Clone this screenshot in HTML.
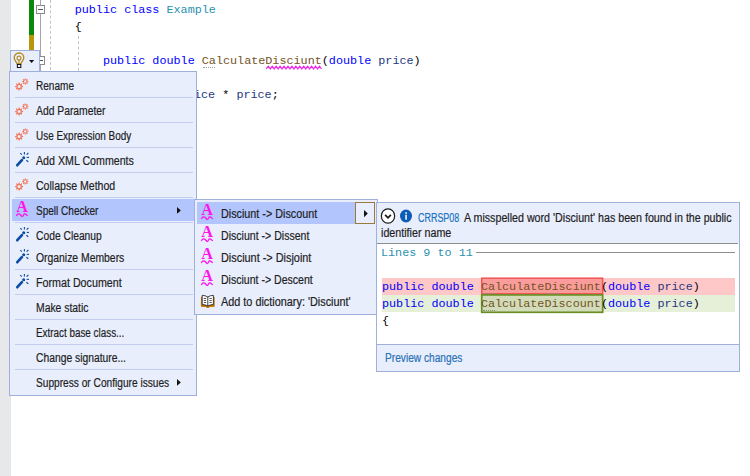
<!DOCTYPE html>
<html><head><meta charset="utf-8">
<style>
html,body{margin:0;padding:0;}
body{width:750px;height:476px;background:#fff;position:relative;overflow:hidden;font-family:"Liberation Sans",sans-serif;}
.abs{position:absolute;}
.code{font-family:"Liberation Mono",monospace;font-size:11.77px;white-space:pre;color:#000;line-height:17px;}
.kw{color:#0000ff;}
.ty{color:#2b91af;}
.pm{color:#1f377f;}
.menu{background:#e9eefd;border:1px solid #a0b0dc;box-sizing:border-box;}
.mi{position:absolute;left:36px;font-size:12px;color:#1e1e1e;white-space:nowrap;line-height:14px;transform-origin:0 50%;transform:scaleX(0.9);margin-top:0.4px;-webkit-text-stroke:0.2px currentColor;}
.sep{position:absolute;left:15px;width:178px;height:1px;background:#c3cdf0;}
</style></head><body>
<!-- left margin -->
<div class="abs" style="left:0;top:0;width:11px;height:476px;background:#e7e8e9;"></div>
<!-- change bars -->
<div class="abs" style="left:29px;top:0;width:5px;height:35px;background:#0a8a0a;"></div>
<div class="abs" style="left:29px;top:35px;width:5px;height:16px;background:#b8960a;"></div>
<!-- outline -->
<div class="abs" style="left:40px;top:0;width:1px;height:71px;background:#a5a5a5;"></div>
<div class="abs" style="left:36px;top:5px;width:9px;height:9px;border:1px solid #8a8a8a;background:#fff;box-sizing:border-box;"></div>
<div class="abs" style="left:38px;top:9px;width:5px;height:1px;background:#555;"></div>
<div class="abs" style="left:49.5px;top:0;width:0;height:70px;border-left:1px dashed #c4c4c4;"></div>
<div class="abs" style="left:78px;top:36px;width:0;height:40px;border-left:1px dashed #c4c4c4;"></div>
<!-- code -->
<div class="abs code" style="left:74.7px;top:2px;"><span class="kw">public</span> <span class="kw">class</span> <span class="ty">Example</span></div>
<div class="abs code" style="left:74.7px;top:19px;">{</div>
<div class="abs code" style="left:102.9px;top:53px;"><span class="kw">public</span> <span class="kw">double</span> <span style="color:#74531f">CalculateDisciunt</span>(<span class="kw">double</span> <span class="pm">price</span>)</div>
<div class="abs code" style="left:194px;top:87px;"><span class="pm">ice</span> * <span class="pm">price</span>;</div>
<svg class="abs" style="left:266px;top:65px" width="58" height="6" viewBox="0 0 58 6"><path d="M0.3 3.9 L2.27 1.2 L4.24 3.9 L6.21 1.2 L8.18 3.9 L10.15 1.2 L12.12 3.9 L14.09 1.2 L16.06 3.9 L18.03 1.2 L20.00 3.9 L21.97 1.2 L23.94 3.9 L25.91 1.2 L27.88 3.9 L29.85 1.2 L31.82 3.9 L33.79 1.2 L35.76 3.9 L37.73 1.2 L39.70 3.9 L41.67 1.2 L43.64 3.9 L45.61 1.2 L47.58 3.9 L49.55 1.2 L51.52 3.9 L53.49 1.2 L55.46 3.9" fill="none" stroke="#f222ee" stroke-width="1.2"/></svg>
<div class="abs" style="left:203px;top:66.5px;width:12px;height:0;border-top:1px dotted #9a9a9a;"></div>
<div class="abs" style="left:36px;top:56px;width:9px;height:9px;border:1px solid #8a8a8a;background:#fff;box-sizing:border-box;"></div>
<div class="abs" style="left:38px;top:60px;width:5px;height:1px;background:#555;"></div>
<!-- lightbulb box -->
<div class="abs" style="left:10px;top:50px;width:30px;height:22px;background:#e9eefd;border:1px solid #a0b0dc;border-bottom:none;box-sizing:border-box;"></div>
<!-- main menu -->
<div class="abs menu" style="left:9px;top:71px;width:188px;height:325px;"></div>
<div class="abs" style="left:12px;top:199px;width:183px;height:22px;background:#b2c5fd;"></div>
<div class="sep" style="top:97px"></div>
<div class="sep" style="top:122px"></div>
<div class="sep" style="top:147px"></div>
<div class="sep" style="top:172px"></div>
<div class="sep" style="top:197px"></div>
<div class="sep" style="top:222px"></div>
<div class="sep" style="top:269px"></div>
<div class="sep" style="top:294px"></div>
<div class="sep" style="top:319px"></div>
<div class="sep" style="top:344px"></div>
<div class="sep" style="top:369px"></div>
<div class="mi" style="left:35.9px;top:79px;transform:scaleX(0.8378);">Rename</div>
<div class="mi" style="left:35.9px;top:104px;transform:scaleX(0.8610);">Add Parameter</div>
<div class="mi" style="left:35.9px;top:129px;transform:scaleX(0.8297);">Use Expression Body</div>
<div class="mi" style="left:35.9px;top:154px;transform:scaleX(0.8879);">Add XML Comments</div>
<div class="mi" style="left:35.9px;top:179px;transform:scaleX(0.8794);">Collapse Method</div>
<div class="mi" style="left:35.9px;top:204px;transform:scaleX(0.8353);">Spell Checker</div>
<div class="mi" style="left:35.9px;top:229px;transform:scaleX(0.8575);">Code Cleanup</div>
<div class="mi" style="left:35.9px;top:251px;transform:scaleX(0.8653);">Organize Members</div>
<div class="mi" style="left:35.9px;top:276px;transform:scaleX(0.8924);">Format Document</div>
<div class="mi" style="left:35.9px;top:301px;transform:scaleX(0.8651);">Make static</div>
<div class="mi" style="left:35.9px;top:326px;transform:scaleX(0.8224);">Extract base class...</div>
<div class="mi" style="left:35.9px;top:351px;transform:scaleX(0.8592);">Change signature...</div>
<div class="mi" style="left:35.9px;top:376px;transform:scaleX(0.8461);">Suppress or Configure issues</div>

<!-- submenu -->
<div class="abs menu" style="left:194px;top:199px;width:184px;height:116px;"></div>
<div class="abs" style="left:197px;top:202px;width:158px;height:22px;background:#b2c5fd;"></div>
<div class="abs" style="left:355px;top:202px;width:20px;height:22px;background:#e9eefd;border:1px solid #9a7b3a;box-sizing:border-box;"></div>
<div class="mi" style="left:221.4px;top:207px;transform:scaleX(0.8987);">Disciunt -&gt; Discount</div>
<div class="mi" style="left:221.4px;top:229px;transform:scaleX(0.8807);">Disciunt -&gt; Dissent</div>
<div class="mi" style="left:221.4px;top:251px;transform:scaleX(0.9067);">Disciunt -&gt; Disjoint</div>
<div class="mi" style="left:221.4px;top:273px;transform:scaleX(0.8786);">Disciunt -&gt; Descent</div>
<div class="mi" style="left:221.4px;top:295px;transform:scaleX(0.9049);">Add to dictionary: 'Disciunt'</div>

<!-- preview panel -->
<div class="abs" style="left:376px;top:202px;width:364px;height:170px;background:#fff;border:1px solid #a0b0dc;box-sizing:border-box;"></div>
<div class="abs" style="left:377px;top:203px;width:362px;height:40px;background:#e9eefd;"></div>
<div class="abs" style="left:377px;top:243px;width:361px;height:1px;background:#8e8e8e;"></div>
<div class="abs" style="left:377px;top:344px;width:362px;height:1px;background:#a0b0dc;"></div>
<div class="abs" style="left:377px;top:345px;width:362px;height:26px;background:#e9eefd;"></div>
<div class="mi" style="left:418px;top:211px;transform:scaleX(0.7460);color:#1b73c2;">CRRSP08</div>
<div class="mi" style="left:464.4px;top:211px;transform:scaleX(0.8897);">A misspelled word 'Disciunt' has been found in the public</div>
<div class="mi" style="left:381px;top:226px;transform:scaleX(0.8931);">identifier name</div>
<div class="mi" style="left:384.6px;top:350.5px;transform:scaleX(0.8469);color:#2a72b5;">Preview changes</div>

<div class="abs code" style="left:381px;top:245px;color:#2b91af">Lines 9 to 11</div>
<div class="abs" style="left:476px;top:252px;width:259px;height:1px;background:#8e8e8e;"></div>
<div class="abs" style="left:382px;top:278px;width:353px;height:17px;background:#ffc8c8;"></div>
<div class="abs" style="left:382px;top:295px;width:353px;height:17px;background:#e6efd8;"></div>
<svg class="abs" style="left:480px;top:276px" width="126" height="40" viewBox="0 0 126 40"><rect x="1.75" y="2.2" width="120.9" height="15.6" fill="#fa9c9b" stroke="#f05453" stroke-width="1.5"/><rect x="1.75" y="18.9" width="120.9" height="17.4" fill="#d2dcba" stroke="#6b8e23" stroke-width="1.7"/></svg>
<div class="abs" style="left:483px;top:293px;width:12px;height:0;border-top:1px dotted #a08a80;"></div><div class="abs" style="left:547px;top:293px;width:12px;height:0;border-top:1px dotted #a08a80;"></div><div class="abs" style="left:483px;top:310px;width:12px;height:0;border-top:1px dotted #8a927a;"></div>
<div class="abs code" style="left:382px;top:279px;"><span class="kw">public</span> <span class="kw">double</span> <span style="color:#74531f">CalculateDisciunt</span>(<span class="kw">double</span> <span class="pm">price</span>)</div>
<div class="abs code" style="left:382px;top:296px;"><span class="kw">public</span> <span class="kw">double</span> <span style="color:#74531f">CalculateDiscount</span>(<span class="kw">double</span> <span class="pm">price</span>)</div>
<div class="abs code" style="left:382px;top:313px;">{</div>
<svg class="abs" style="left:10px;top:75px;overflow:visible" width="20" height="20" viewBox="0 0 20 20"><circle cx="9.1" cy="11.5" r="2.2" fill="none" stroke="#f1765a" stroke-width="1.3"/><line x1="11.70" y1="11.50" x2="13.10" y2="11.50" stroke="#f1765a" stroke-width="1.25"/><line x1="10.94" y1="13.34" x2="11.93" y2="14.33" stroke="#f1765a" stroke-width="1.25"/><line x1="9.10" y1="14.10" x2="9.10" y2="15.50" stroke="#f1765a" stroke-width="1.25"/><line x1="7.26" y1="13.34" x2="6.27" y2="14.33" stroke="#f1765a" stroke-width="1.25"/><line x1="6.50" y1="11.50" x2="5.10" y2="11.50" stroke="#f1765a" stroke-width="1.25"/><line x1="7.26" y1="9.66" x2="6.27" y2="8.67" stroke="#f1765a" stroke-width="1.25"/><line x1="9.10" y1="8.90" x2="9.10" y2="7.50" stroke="#f1765a" stroke-width="1.25"/><line x1="10.94" y1="9.66" x2="11.93" y2="8.67" stroke="#f1765a" stroke-width="1.25"/><circle cx="15.3" cy="6.5" r="1.8" fill="none" stroke="#f1765a" stroke-width="1.1"/><line x1="17.40" y1="6.50" x2="18.40" y2="6.50" stroke="#f1765a" stroke-width="1.1"/><line x1="16.78" y1="7.98" x2="17.49" y2="8.69" stroke="#f1765a" stroke-width="1.1"/><line x1="15.30" y1="8.60" x2="15.30" y2="9.60" stroke="#f1765a" stroke-width="1.1"/><line x1="13.82" y1="7.98" x2="13.11" y2="8.69" stroke="#f1765a" stroke-width="1.1"/><line x1="13.20" y1="6.50" x2="12.20" y2="6.50" stroke="#f1765a" stroke-width="1.1"/><line x1="13.82" y1="5.02" x2="13.11" y2="4.31" stroke="#f1765a" stroke-width="1.1"/><line x1="15.30" y1="4.40" x2="15.30" y2="3.40" stroke="#f1765a" stroke-width="1.1"/><line x1="16.78" y1="5.02" x2="17.49" y2="4.31" stroke="#f1765a" stroke-width="1.1"/></svg>
<svg class="abs" style="left:10px;top:100px;overflow:visible" width="20" height="20" viewBox="0 0 20 20"><circle cx="9.1" cy="11.5" r="2.2" fill="none" stroke="#f1765a" stroke-width="1.3"/><line x1="11.70" y1="11.50" x2="13.10" y2="11.50" stroke="#f1765a" stroke-width="1.25"/><line x1="10.94" y1="13.34" x2="11.93" y2="14.33" stroke="#f1765a" stroke-width="1.25"/><line x1="9.10" y1="14.10" x2="9.10" y2="15.50" stroke="#f1765a" stroke-width="1.25"/><line x1="7.26" y1="13.34" x2="6.27" y2="14.33" stroke="#f1765a" stroke-width="1.25"/><line x1="6.50" y1="11.50" x2="5.10" y2="11.50" stroke="#f1765a" stroke-width="1.25"/><line x1="7.26" y1="9.66" x2="6.27" y2="8.67" stroke="#f1765a" stroke-width="1.25"/><line x1="9.10" y1="8.90" x2="9.10" y2="7.50" stroke="#f1765a" stroke-width="1.25"/><line x1="10.94" y1="9.66" x2="11.93" y2="8.67" stroke="#f1765a" stroke-width="1.25"/><circle cx="15.3" cy="6.5" r="1.8" fill="none" stroke="#f1765a" stroke-width="1.1"/><line x1="17.40" y1="6.50" x2="18.40" y2="6.50" stroke="#f1765a" stroke-width="1.1"/><line x1="16.78" y1="7.98" x2="17.49" y2="8.69" stroke="#f1765a" stroke-width="1.1"/><line x1="15.30" y1="8.60" x2="15.30" y2="9.60" stroke="#f1765a" stroke-width="1.1"/><line x1="13.82" y1="7.98" x2="13.11" y2="8.69" stroke="#f1765a" stroke-width="1.1"/><line x1="13.20" y1="6.50" x2="12.20" y2="6.50" stroke="#f1765a" stroke-width="1.1"/><line x1="13.82" y1="5.02" x2="13.11" y2="4.31" stroke="#f1765a" stroke-width="1.1"/><line x1="15.30" y1="4.40" x2="15.30" y2="3.40" stroke="#f1765a" stroke-width="1.1"/><line x1="16.78" y1="5.02" x2="17.49" y2="4.31" stroke="#f1765a" stroke-width="1.1"/></svg>
<svg class="abs" style="left:10px;top:125px;overflow:visible" width="20" height="20" viewBox="0 0 20 20"><circle cx="9.1" cy="11.5" r="2.2" fill="none" stroke="#f1765a" stroke-width="1.3"/><line x1="11.70" y1="11.50" x2="13.10" y2="11.50" stroke="#f1765a" stroke-width="1.25"/><line x1="10.94" y1="13.34" x2="11.93" y2="14.33" stroke="#f1765a" stroke-width="1.25"/><line x1="9.10" y1="14.10" x2="9.10" y2="15.50" stroke="#f1765a" stroke-width="1.25"/><line x1="7.26" y1="13.34" x2="6.27" y2="14.33" stroke="#f1765a" stroke-width="1.25"/><line x1="6.50" y1="11.50" x2="5.10" y2="11.50" stroke="#f1765a" stroke-width="1.25"/><line x1="7.26" y1="9.66" x2="6.27" y2="8.67" stroke="#f1765a" stroke-width="1.25"/><line x1="9.10" y1="8.90" x2="9.10" y2="7.50" stroke="#f1765a" stroke-width="1.25"/><line x1="10.94" y1="9.66" x2="11.93" y2="8.67" stroke="#f1765a" stroke-width="1.25"/><circle cx="15.3" cy="6.5" r="1.8" fill="none" stroke="#f1765a" stroke-width="1.1"/><line x1="17.40" y1="6.50" x2="18.40" y2="6.50" stroke="#f1765a" stroke-width="1.1"/><line x1="16.78" y1="7.98" x2="17.49" y2="8.69" stroke="#f1765a" stroke-width="1.1"/><line x1="15.30" y1="8.60" x2="15.30" y2="9.60" stroke="#f1765a" stroke-width="1.1"/><line x1="13.82" y1="7.98" x2="13.11" y2="8.69" stroke="#f1765a" stroke-width="1.1"/><line x1="13.20" y1="6.50" x2="12.20" y2="6.50" stroke="#f1765a" stroke-width="1.1"/><line x1="13.82" y1="5.02" x2="13.11" y2="4.31" stroke="#f1765a" stroke-width="1.1"/><line x1="15.30" y1="4.40" x2="15.30" y2="3.40" stroke="#f1765a" stroke-width="1.1"/><line x1="16.78" y1="5.02" x2="17.49" y2="4.31" stroke="#f1765a" stroke-width="1.1"/></svg>
<svg class="abs" style="left:10px;top:175px;overflow:visible" width="20" height="20" viewBox="0 0 20 20"><circle cx="9.1" cy="11.5" r="2.2" fill="none" stroke="#f1765a" stroke-width="1.3"/><line x1="11.70" y1="11.50" x2="13.10" y2="11.50" stroke="#f1765a" stroke-width="1.25"/><line x1="10.94" y1="13.34" x2="11.93" y2="14.33" stroke="#f1765a" stroke-width="1.25"/><line x1="9.10" y1="14.10" x2="9.10" y2="15.50" stroke="#f1765a" stroke-width="1.25"/><line x1="7.26" y1="13.34" x2="6.27" y2="14.33" stroke="#f1765a" stroke-width="1.25"/><line x1="6.50" y1="11.50" x2="5.10" y2="11.50" stroke="#f1765a" stroke-width="1.25"/><line x1="7.26" y1="9.66" x2="6.27" y2="8.67" stroke="#f1765a" stroke-width="1.25"/><line x1="9.10" y1="8.90" x2="9.10" y2="7.50" stroke="#f1765a" stroke-width="1.25"/><line x1="10.94" y1="9.66" x2="11.93" y2="8.67" stroke="#f1765a" stroke-width="1.25"/><circle cx="15.3" cy="6.5" r="1.8" fill="none" stroke="#f1765a" stroke-width="1.1"/><line x1="17.40" y1="6.50" x2="18.40" y2="6.50" stroke="#f1765a" stroke-width="1.1"/><line x1="16.78" y1="7.98" x2="17.49" y2="8.69" stroke="#f1765a" stroke-width="1.1"/><line x1="15.30" y1="8.60" x2="15.30" y2="9.60" stroke="#f1765a" stroke-width="1.1"/><line x1="13.82" y1="7.98" x2="13.11" y2="8.69" stroke="#f1765a" stroke-width="1.1"/><line x1="13.20" y1="6.50" x2="12.20" y2="6.50" stroke="#f1765a" stroke-width="1.1"/><line x1="13.82" y1="5.02" x2="13.11" y2="4.31" stroke="#f1765a" stroke-width="1.1"/><line x1="15.30" y1="4.40" x2="15.30" y2="3.40" stroke="#f1765a" stroke-width="1.1"/><line x1="16.78" y1="5.02" x2="17.49" y2="4.31" stroke="#f1765a" stroke-width="1.1"/></svg>
<svg class="abs" style="left:10px;top:150px;overflow:visible" width="20" height="20" viewBox="0 0 20 20"><line x1="7.300000000000001" y1="15.199999999999989" x2="11.899999999999999" y2="10.199999999999989" stroke="#0c4ea2" stroke-width="2.7" stroke-linecap="round"/><circle cx="13.7" cy="7.800000000000011" r="1.55" fill="#0c4ea2"/><line x1="14.4" y1="2.0" x2="14.4" y2="4.4" stroke="#0c4ea2" stroke-width="1.1"/><line x1="10.3" y1="3.0" x2="11.7" y2="4.6" stroke="#0c4ea2" stroke-width="1.1"/><line x1="16.6" y1="4.6" x2="18.4" y2="3.0" stroke="#0c4ea2" stroke-width="1.1"/><line x1="16.7" y1="7.4" x2="19.0" y2="7.4" stroke="#0c4ea2" stroke-width="1.1"/><line x1="16.3" y1="10.2" x2="18.3" y2="11.8" stroke="#0c4ea2" stroke-width="1.1"/></svg>
<svg class="abs" style="left:10px;top:225px;overflow:visible" width="20" height="20" viewBox="0 0 20 20"><line x1="7.300000000000001" y1="15.199999999999989" x2="11.899999999999999" y2="10.199999999999989" stroke="#0c4ea2" stroke-width="2.7" stroke-linecap="round"/><circle cx="13.7" cy="7.800000000000011" r="1.55" fill="#0c4ea2"/><line x1="14.4" y1="2.0" x2="14.4" y2="4.4" stroke="#0c4ea2" stroke-width="1.1"/><line x1="10.3" y1="3.0" x2="11.7" y2="4.6" stroke="#0c4ea2" stroke-width="1.1"/><line x1="16.6" y1="4.6" x2="18.4" y2="3.0" stroke="#0c4ea2" stroke-width="1.1"/><line x1="16.7" y1="7.4" x2="19.0" y2="7.4" stroke="#0c4ea2" stroke-width="1.1"/><line x1="16.3" y1="10.2" x2="18.3" y2="11.8" stroke="#0c4ea2" stroke-width="1.1"/></svg>
<svg class="abs" style="left:10px;top:247px;overflow:visible" width="20" height="20" viewBox="0 0 20 20"><line x1="7.300000000000001" y1="15.199999999999989" x2="11.899999999999999" y2="10.199999999999989" stroke="#0c4ea2" stroke-width="2.7" stroke-linecap="round"/><circle cx="13.7" cy="7.800000000000011" r="1.55" fill="#0c4ea2"/><line x1="14.4" y1="2.0" x2="14.4" y2="4.4" stroke="#0c4ea2" stroke-width="1.1"/><line x1="10.3" y1="3.0" x2="11.7" y2="4.6" stroke="#0c4ea2" stroke-width="1.1"/><line x1="16.6" y1="4.6" x2="18.4" y2="3.0" stroke="#0c4ea2" stroke-width="1.1"/><line x1="16.7" y1="7.4" x2="19.0" y2="7.4" stroke="#0c4ea2" stroke-width="1.1"/><line x1="16.3" y1="10.2" x2="18.3" y2="11.8" stroke="#0c4ea2" stroke-width="1.1"/></svg>
<svg class="abs" style="left:10px;top:272px;overflow:visible" width="20" height="20" viewBox="0 0 20 20"><line x1="7.300000000000001" y1="15.199999999999989" x2="11.899999999999999" y2="10.199999999999989" stroke="#0c4ea2" stroke-width="2.7" stroke-linecap="round"/><circle cx="13.7" cy="7.800000000000011" r="1.55" fill="#0c4ea2"/><line x1="14.4" y1="2.0" x2="14.4" y2="4.4" stroke="#0c4ea2" stroke-width="1.1"/><line x1="10.3" y1="3.0" x2="11.7" y2="4.6" stroke="#0c4ea2" stroke-width="1.1"/><line x1="16.6" y1="4.6" x2="18.4" y2="3.0" stroke="#0c4ea2" stroke-width="1.1"/><line x1="16.7" y1="7.4" x2="19.0" y2="7.4" stroke="#0c4ea2" stroke-width="1.1"/><line x1="16.3" y1="10.2" x2="18.3" y2="11.8" stroke="#0c4ea2" stroke-width="1.1"/></svg>
<svg class="abs" style="left:14px;top:200.35px;overflow:visible" width="16" height="20" viewBox="0 0 16 20"><text x="8" y="12" text-anchor="middle" font-family="Liberation Serif, serif" font-weight="bold" font-size="16.2" fill="#ff14ee">A</text><path d="M2.2 15.9 Q4.4 12.5 6.2 14.5 T8 16.5 Q9.2 16.5 9.8 14.5 T13.8 15.9" fill="none" stroke="#ff14ee" stroke-width="1.25"/></svg>
<svg class="abs" style="left:199.3px;top:203.35px;overflow:visible" width="16" height="20" viewBox="0 0 16 20"><text x="8" y="12" text-anchor="middle" font-family="Liberation Serif, serif" font-weight="bold" font-size="16.2" fill="#ff14ee">A</text><path d="M2.2 15.9 Q4.4 12.5 6.2 14.5 T8 16.5 Q9.2 16.5 9.8 14.5 T13.8 15.9" fill="none" stroke="#ff14ee" stroke-width="1.25"/></svg>
<svg class="abs" style="left:199.3px;top:225.35px;overflow:visible" width="16" height="20" viewBox="0 0 16 20"><text x="8" y="12" text-anchor="middle" font-family="Liberation Serif, serif" font-weight="bold" font-size="16.2" fill="#ff14ee">A</text><path d="M2.2 15.9 Q4.4 12.5 6.2 14.5 T8 16.5 Q9.2 16.5 9.8 14.5 T13.8 15.9" fill="none" stroke="#ff14ee" stroke-width="1.25"/></svg>
<svg class="abs" style="left:199.3px;top:247.35000000000002px;overflow:visible" width="16" height="20" viewBox="0 0 16 20"><text x="8" y="12" text-anchor="middle" font-family="Liberation Serif, serif" font-weight="bold" font-size="16.2" fill="#ff14ee">A</text><path d="M2.2 15.9 Q4.4 12.5 6.2 14.5 T8 16.5 Q9.2 16.5 9.8 14.5 T13.8 15.9" fill="none" stroke="#ff14ee" stroke-width="1.25"/></svg>
<svg class="abs" style="left:199.3px;top:269.35px;overflow:visible" width="16" height="20" viewBox="0 0 16 20"><text x="8" y="12" text-anchor="middle" font-family="Liberation Serif, serif" font-weight="bold" font-size="16.2" fill="#ff14ee">A</text><path d="M2.2 15.9 Q4.4 12.5 6.2 14.5 T8 16.5 Q9.2 16.5 9.8 14.5 T13.8 15.9" fill="none" stroke="#ff14ee" stroke-width="1.25"/></svg>
<svg class="abs" style="left:200px;top:294px;overflow:visible" width="16" height="16" viewBox="0 0 16 16"><path d="M0.9000000000000057 3.3000000000000114 Q0.9000000000000057 2.8000000000000114 1.5999999999999943 2.8000000000000114 L14.0 2.8000000000000114 Q14.699999999999989 2.8000000000000114 14.699999999999989 3.5 L14.699999999999989 12.0 Q14.699999999999989 12.899999999999977 13.800000000000011 12.899999999999977 L9.599999999999994 12.899999999999977 L9.0 14.0 L6.599999999999994 14.0 L6.0 12.899999999999977 L1.8000000000000114 12.899999999999977 Q0.9000000000000057 12.899999999999977 0.9000000000000057 12.0 Z" fill="#c8790e"/><path d="M2.1999999999999886 1.3999999999999773 Q5.5 1.3999999999999773 7.800000000000011 3.0 Q10.099999999999994 1.3999999999999773 13.400000000000006 1.3999999999999773 L13.400000000000006 10.600000000000023 Q10.099999999999994 10.600000000000023 7.800000000000011 12.0 Q5.5 10.600000000000023 2.1999999999999886 10.600000000000023 Z" fill="#fff" stroke="#2a2a2a" stroke-width="0.9"/><line x1="7.800000000000011" y1="3.0" x2="7.800000000000011" y2="12.0" stroke="#2a2a2a" stroke-width="0.9"/><line x1="3.8000000000000114" y1="4.5" x2="6.199999999999989" y2="4.5" stroke="#444" stroke-width="0.9"/><line x1="9.400000000000006" y1="4.5" x2="11.800000000000011" y2="4.5" stroke="#444" stroke-width="0.9"/><line x1="3.8000000000000114" y1="6.5" x2="6.199999999999989" y2="6.5" stroke="#444" stroke-width="0.9"/><line x1="9.400000000000006" y1="6.5" x2="11.800000000000011" y2="6.5" stroke="#444" stroke-width="0.9"/><line x1="3.8000000000000114" y1="8.5" x2="6.199999999999989" y2="8.5" stroke="#444" stroke-width="0.9"/><line x1="9.400000000000006" y1="8.5" x2="11.800000000000011" y2="8.5" stroke="#444" stroke-width="0.9"/></svg>
<svg class="abs" style="left:177px;top:207.2px;overflow:visible" width="3.8" height="6.8" viewBox="0 0 3.8 6.8"><path d="M0 0 L3.8 3.4 L0 6.8 Z" fill="#111"/></svg>
<svg class="abs" style="left:177px;top:379.20000000000005px;overflow:visible" width="3.8" height="6.8" viewBox="0 0 3.8 6.8"><path d="M0 0 L3.8 3.4 L0 6.8 Z" fill="#111"/></svg>
<svg class="abs" style="left:363.9px;top:209.8px;overflow:visible" width="3.8" height="7.2" viewBox="0 0 3.8 7.2"><path d="M0 0 L3.8 3.6 L0 7.2 Z" fill="#111"/></svg>
<svg class="abs" style="left:10px;top:50.4px;overflow:visible" width="20" height="20" viewBox="0 0 20 20"><path d="M9 3 C5.9 3 4.2 5.3 4.2 7.8 C4.2 10.4 6.6 11.6 7.1 13.9 L10.9 13.9 C11.4 11.6 13.8 10.4 13.8 7.8 C13.8 5.3 12.1 3 9 3 Z" fill="none" stroke="#b48a1c" stroke-width="1.35"/><circle cx="9" cy="8.1" r="2" fill="none" stroke="#b48a1c" stroke-width="1.1"/><line x1="9" y1="10.1" x2="9" y2="13.8" stroke="#b48a1c" stroke-width="1.1"/><rect x="7.4" y="14.5" width="3.4" height="3" fill="#fff" stroke="#1a1a1a" stroke-width="1.1"/></svg>
<svg class="abs" style="left:29.2px;top:60px;overflow:visible" width="5.2" height="3" viewBox="0 0 5.2 3"><path d="M0 0 L5.2 0 L2.6 3 Z" fill="#111"/></svg>
<svg class="abs" style="left:379.9px;top:207.7px;overflow:visible" width="16" height="16" viewBox="0 0 16 16"><ellipse cx="8" cy="8" rx="6.65" ry="7.15" fill="#fff" stroke="#1a1a1a" stroke-width="1.2"/><path d="M5.1 6.9 L8 9.9 L10.9 6.9" fill="none" stroke="#1a1a1a" stroke-width="1.7"/></svg>
<svg class="abs" style="left:399px;top:208.7px;overflow:visible" width="14" height="14" viewBox="0 0 14 14"><ellipse cx="7" cy="7" rx="6" ry="6.5" fill="#0b5cb6"/><rect x="6.3" y="3.2" width="1.5" height="1.6" fill="#fff"/><rect x="6.3" y="5.7" width="1.5" height="5" fill="#fff"/></svg>

</body></html>
